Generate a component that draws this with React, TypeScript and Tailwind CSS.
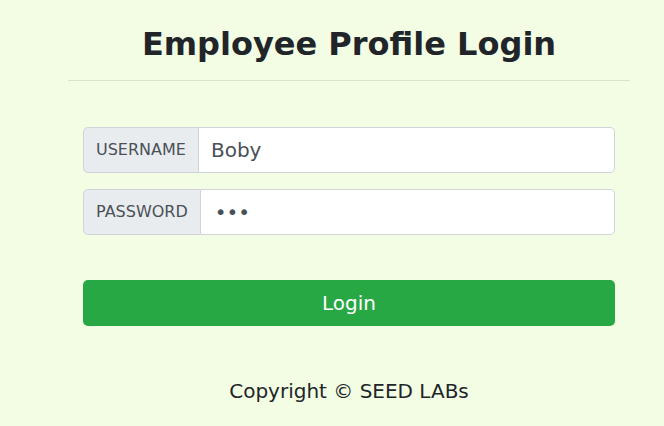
export default function App() {
    return (
        <div className="min-h-screen w-full bg-[#f2fde4] font-['DejaVu_Sans',sans-serif] text-[#212529]">
            <div className="ml-[68px] w-[562px] pt-[25px]">
                <h2 className="text-center text-[32px] font-bold leading-[1.2]">Employee Profile Login</h2>
                <hr className="mt-[17px] border-0 border-t border-black/10" />

                <div className="mt-[46px] flex flex-col gap-[16px] px-[15px]">
                    <div className="flex h-[46px] w-full">
                        <span className="flex items-center rounded-l-[5px] border border-[#ced4da] bg-[#e9ecef] px-3 text-[16px] text-[#495057]">
                            USERNAME
                        </span>
                        <span className="flex flex-1 items-center rounded-r-[5px] border border-l-0 border-[#ced4da] bg-white px-3 text-[20px] text-[#495057]">
                            Boby
                        </span>
                    </div>
                    <div className="flex h-[46px] w-full">
                        <span className="flex items-center rounded-l-[5px] border border-[#ced4da] bg-[#e9ecef] px-3 text-[16px] text-[#495057]">
                            PASSWORD
                        </span>
                        <span className="flex flex-1 items-center rounded-r-[5px] border border-l-0 border-[#ced4da] bg-white px-3 pl-[14px] text-[20px] text-[#495057]">
                            •••
                        </span>
                    </div>
                </div>

                <div className="mt-[45px] px-[15px]">
                    <button className="flex h-[46px] w-full items-center justify-center rounded-[5px] bg-[#28a745] text-[20px] text-white">
                        Login
                    </button>
                </div>

                <p className="mt-[50px] text-center text-[20px] leading-[1.5]">Copyright © SEED LABs</p>
            </div>
        </div>
    );
}
